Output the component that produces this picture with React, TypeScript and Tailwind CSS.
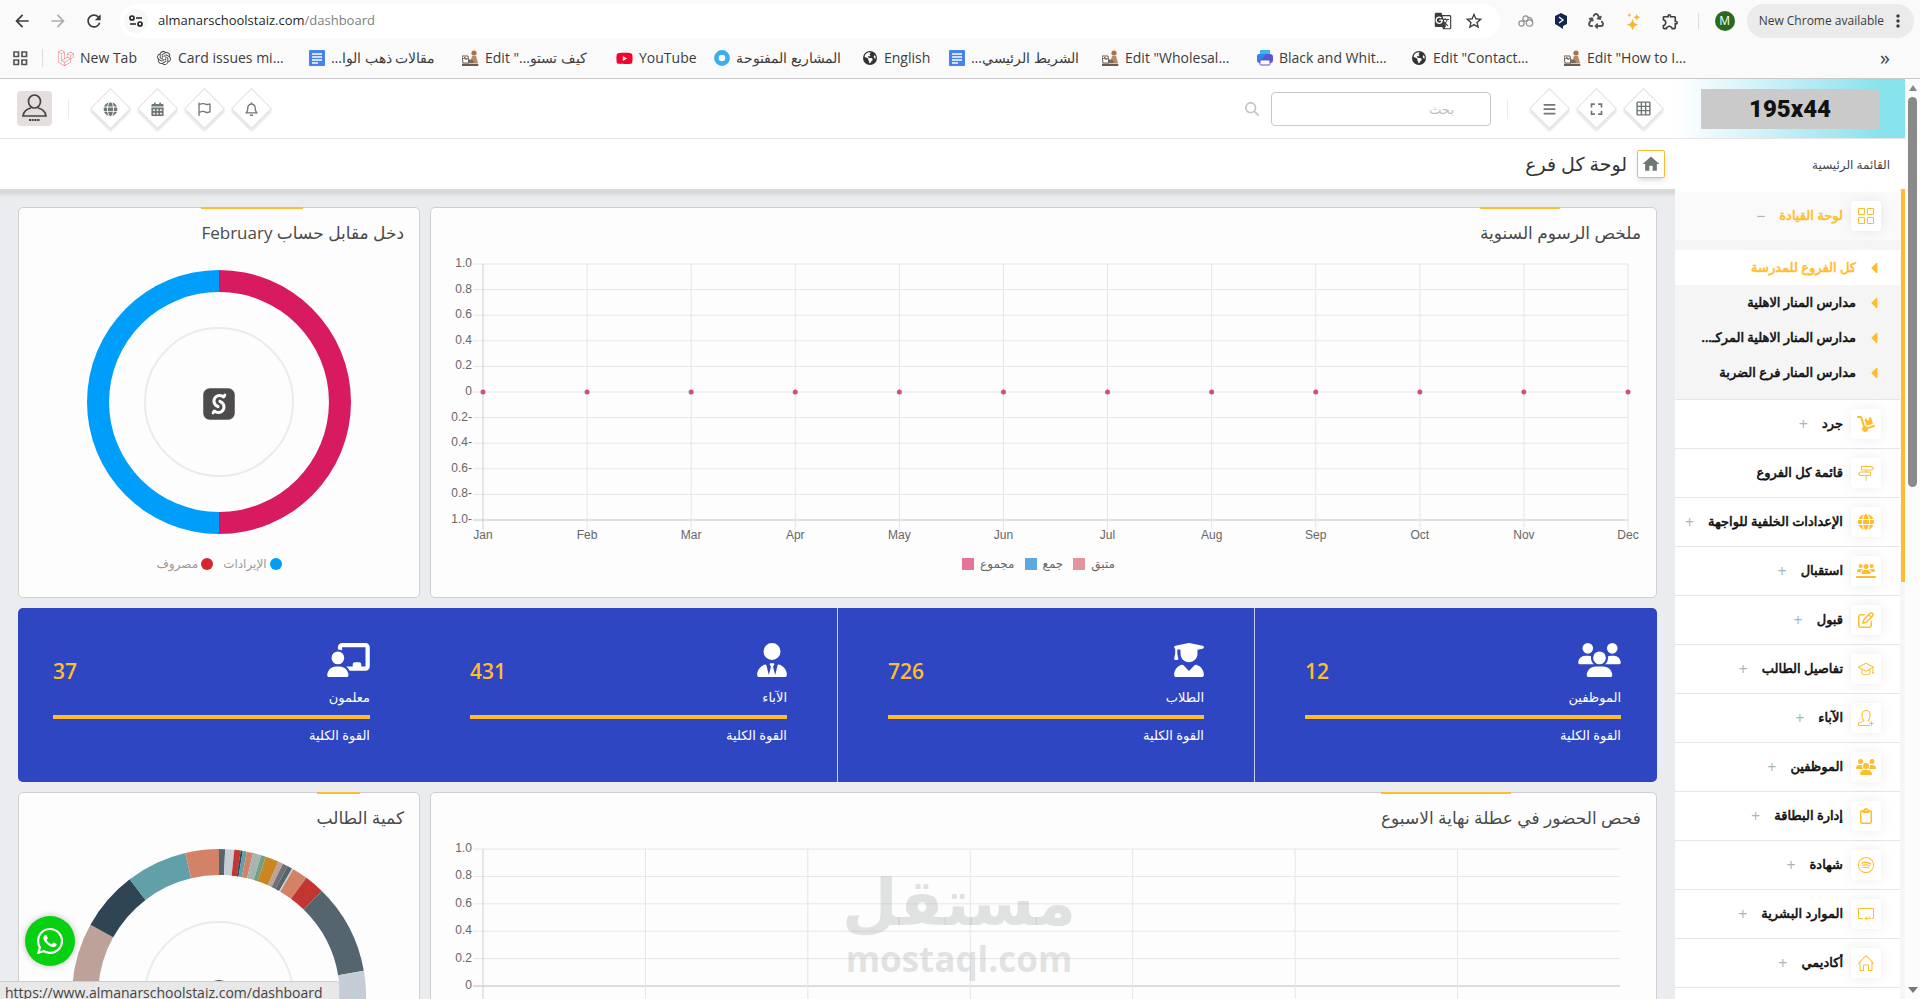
import type { ReactNode } from "react";
import {
  FaBars,
  FaCalendarDays,
  FaChalkboardUser,
  FaDolly,
  FaEarthAmericas,
  FaGlobe,
  FaLaravel,
  FaMagnifyingGlass,
  FaRecycle,
  FaRegBell,
  FaRegClipboard,
  FaRegFlag,
  FaRegPenToSquare,
  FaUserGraduate,
  FaUserTie,
  FaUsers,
  FaUsersLine,
  FaWhatsapp,
  FaYoutube,
} from "react-icons/fa6";
import { FaSellcast, FaCaretLeft } from "react-icons/fa";
import {
  MdArrowBack,
  MdArrowForward,
  MdGTranslate,
  MdGridOn,
  MdMoreVert,
  MdOutlineExtension,
  MdRefresh,
  MdStarOutline,
  MdFullscreen,
  MdHome,
} from "react-icons/md";
import { BsStars } from "react-icons/bs";
import { SiOpenai } from "react-icons/si";
import {
  SlDirections,
  SlGraduation,
  SlGrid,
  SlHome,
  SlSocialSpotify,
  SlUserFollow,
} from "react-icons/sl";

/* ---------- Browser bar ---------- */

function DocsIcon() {
  return (
    <svg width="16" height="16" viewBox="0 0 16 16">
      <rect width="16" height="16" rx="1" fill="#4683ea" />
      <path d="M3 4h10M3 7h10M3 10h10M3 13h6" stroke="#fff" strokeWidth="1.4" />
    </svg>
  );
}

function SketchIcon() {
  return (
    <svg width="17" height="16" viewBox="0 0 17 16">
      <path d="M0 6h6l1 7H1z" fill="#fff" stroke="#6b5a4c" />
      <path d="M1 9l2-2 1 3 2-2M0 14h16v2H0z" fill="#6b5a4c" stroke="#6b5a4c" strokeWidth=".6" />
      <circle cx="12" cy="3" r="2.600" fill="#b07040" />
      <path d="M10 6h4l2 7H8z" fill="#b98a66" />
      <path d="M6 9l5 1 1 3-6 0z" fill="#7b6a5c" />
    </svg>
  );
}

function RingIcon() {
  return (
    <svg width="16" height="16" viewBox="0 0 16 16">
      <circle cx="8" cy="8" r="5.6" fill="none" stroke="#3aaeed" strokeWidth="4.6" />
    </svg>
  );
}

function PrinterIcon() {
  return (
    <svg width="16" height="16" viewBox="0 0 16 16">
      <path d="M3 0h10v5H3z" fill="#35b8f0" />
      <rect y="4" width="16" height="9" rx="3" fill="#5a55d0" />
      <path d="M0 6a3 3 0 0 1 3-2h6l-6 8a3 3 0 0 1-3-3z" fill="#2f86ea" />
      <rect x="3" y="10" width="10" height="5" rx="1" fill="#fff" stroke="#6a4fc0" />
    </svg>
  );
}

function TuneIcon() {
  return (
    <svg width="14" height="12" viewBox="0 0 14 12" fill="none" stroke="#222" strokeWidth="1.7">
      <circle cx="3" cy="3" r="2" />
      <path d="M7 3h6M1 9h6" />
      <circle cx="11" cy="9" r="2" />
    </svg>
  );
}

const bookmarks: { label: string; icon: ReactNode; width: string; rtl?: boolean }[] = [
  { label: "New Tab", icon: <FaLaravel className="size-4 text-[#ef6a6a]" />, width: "w-[98px]" },
  { label: "Card issues mi…", icon: <SiOpenai className="size-3.5 text-[#444]" />, width: "w-[153px]" },
  { label: "مقالات ذهب الوا…", icon: <DocsIcon />, width: "w-[154px]", rtl: true },
  { label: "Edit \"…كيف تستو", icon: <SketchIcon />, width: "w-[154px]" },
  { label: "YouTube", icon: <FaYoutube className="size-[17px] text-[#f8002f]" />, width: "w-[97px]" },
  { label: "المشاريع المفتوحة", icon: <RingIcon />, width: "w-[148px]", rtl: true },
  { label: "English", icon: <FaEarthAmericas className="size-3.5 text-[#333]" />, width: "w-[87px]" },
  { label: "الشريط الرئيسي…", icon: <DocsIcon />, width: "w-[154px]", rtl: true },
  { label: "Edit \"Wholesal…", icon: <SketchIcon />, width: "w-[154px]" },
  { label: "Black and Whit…", icon: <PrinterIcon />, width: "w-[154px]" },
  { label: "Edit \"Contact…", icon: <FaEarthAmericas className="size-3.5 text-[#333]" />, width: "w-[154px]" },
  { label: "Edit \"How to I…", icon: <SketchIcon />, width: "w-[140px]" },
];

function BrowserBar() {
  return (
    <div className="shrink-0 border-b border-[#c8c8c8] bg-[#fafafa] font-['Open_Sans','Noto_Sans',sans-serif] text-[#3c3c3c]">
      <div className="flex h-[38px] items-center pt-1">
        <div className="flex w-[120px] items-center gap-4 pl-3">
          <button aria-label="Back"><MdArrowBack className="size-5" /></button>
          <button aria-label="Forward"><MdArrowForward className="size-5 text-[#aab0ae]" /></button>
          <button aria-label="Reload"><MdRefresh className="size-5" /></button>
        </div>
        <div className="flex h-[34px] flex-1 items-center rounded-full bg-white pr-4 pl-1">
          <button aria-label="Site information" className="flex size-6 items-center justify-center rounded-full bg-[#f7f7f7]">
            <TuneIcon />
          </button>
          <span className="flex-1 pl-2.5 text-[13px] text-[#1f1f1f]">
            almanarschoolstaiz.com<span className="text-[#7c8280]">/dashboard</span>
          </span>
          <MdGTranslate className="mr-3 size-[18px]" />
          <MdStarOutline className="size-5" />
        </div>
        <div className="flex items-center gap-5 pl-[18px]">
          <svg width="16" height="14" viewBox="0 0 16 14" fill="none" stroke="#8a8f8e" strokeWidth="1.2">
            <circle cx="3.5" cy="9.5" r="2.600" />
            <circle cx="7.500" cy="4.500" r="2.600" />
            <circle cx="11.500" cy="9" r="3.200" />
            <path d="M10 3.500a4 4 0 0 1 4.500 4" />
          </svg>
          <svg width="14" height="18" viewBox="0 0 14 18">
            <path d="M7 1l6 3v8l-4 2v3l-3-2-5-3V4z" fill="#13264f" />
            <path d="M5 5l4 3-4 3" fill="none" stroke="#fff" strokeWidth="1.3" />
          </svg>
          <FaRecycle className="size-4 text-[#555]" />
          <BsStars className="size-[17px] -scale-x-100 text-[#ffb42e]" />
          <MdOutlineExtension className="size-[19px]" />
        </div>
        <span className="ml-[18px] h-4 w-px bg-[#dcdcdc]" />
        <span className="ml-4 flex size-5 items-center justify-center rounded-full bg-[#2a6a1c] text-xs text-white">M</span>
        <button className="mr-1.5 ml-3 flex h-[34px] items-center rounded-full bg-[#ebebeb] pr-1.5 pl-3 text-xs">
          New Chrome available
          <MdMoreVert className="ml-1 size-5" />
        </button>
      </div>
      <nav aria-label="Bookmarks" className="flex h-10 items-center pl-3 text-sm">
        <svg width="16" height="16" viewBox="0 0 16 16" fill="none" stroke="#555" strokeWidth="1.7">
          <path d="M2 2h4.500v4.500H2zM10 2h4.500v4.500H10zM2 10h4.500v4.500H2zM10 10h4.500v4.500H10z" />
        </svg>
        <span className="mx-[14px] h-[18px] w-px bg-[#ddd]" />
        {bookmarks.map((b) => (
          <a key={b.label} href="#" className={`flex shrink-0 items-center gap-1.5 whitespace-nowrap ${b.width}`}>
            <span className="flex w-[17px] shrink-0 justify-center">{b.icon}</span>
            <span dir={b.rtl ? "rtl" : "ltr"}>{b.label}</span>
          </a>
        ))}
        <button aria-label="More bookmarks" className="mr-[30px] ml-auto text-xl leading-5">»</button>
      </nav>
    </div>
  );
}

/* ---------- App header ---------- */

function Diamond({ label, children }: { label: string; children: ReactNode }) {
  return (
    <button
      aria-label={label}
      className="mx-[9px] flex size-[29px] rotate-45 items-center justify-center border border-[#e2e2e2] bg-white text-[#6f7776] shadow-[2px_2px_2px_#e4e4e4]"
    >
      <span className="-rotate-45">{children}</span>
    </button>
  );
}

function AppHeader() {
  return (
    <header className="flex h-[60px] shrink-0 items-center border-b border-[#e5e5e5] bg-white">
      <div className="flex h-full w-[230px] items-center justify-end bg-linear-to-l from-[#86e2ec] from-10% via-[#b9ebf6] via-45% to-white pl-[26px]">
        <div className="flex h-10 w-[178px] items-center justify-center bg-[#cacaca] font-[Roboto,sans-serif] text-2xl font-black text-[#111]">
          195x44
        </div>
      </div>
      <div className="flex pr-2">
        <Diamond label="الوحدات"><MdGridOn className="size-[17px]" /></Diamond>
        <Diamond label="ملء الشاشة"><MdFullscreen className="size-5" /></Diamond>
        <Diamond label="القائمة"><FaBars className="size-3.5" /></Diamond>
      </div>
      <span className="mr-[18px] h-5 w-px bg-[#ececec]" />
      <form className="mr-4 flex items-center gap-3">
        <input
          aria-label="بحث"
          placeholder="بحث"
          className="h-[34px] w-[220px] rounded border border-[#c9c9c9] px-9 text-[13px] placeholder:text-[#bdbdbd]"
        />
        <button aria-label="ابحث"><FaMagnifyingGlass className="size-3.5 text-[#c6c6c6]" /></button>
      </form>
      <div className="mr-auto flex">
        <Diamond label="الإشعارات"><FaRegBell className="size-3.5" /></Diamond>
        <Diamond label="الرسائل"><FaRegFlag className="size-3.5" /></Diamond>
        <Diamond label="التقويم"><FaCalendarDays className="size-3.5" /></Diamond>
        <Diamond label="اللغة"><FaGlobe className="size-3.5" /></Diamond>
      </div>
      <span className="mr-[18px] h-5 w-px bg-[#ececec]" />
      <button aria-label="الحساب" className="mr-4 ml-[17px] size-[35px] rounded bg-[#e4dfdd]">
        <svg viewBox="0 0 35 35" fill="none" stroke="#444" strokeWidth="1.7">
          <ellipse cx="17.500" cy="10.500" rx="6" ry="6.500" />
          <path d="M14 17c-4 1-7.500 3-8 8h23c-.5-5-4-7-8-8" />
          <path d="M12 29h11" strokeWidth="2" strokeDasharray="2 .6" />
        </svg>
      </button>
    </header>
  );
}

/* ---------- Sidebar ---------- */

function RoomIcon() {
  return (
    <svg className="size-4" viewBox="0 0 16 16" fill="none" stroke="currentColor">
      <path d="M5 12.500H.5v-10h15v10h-2M7 12.500h5v-2M9 10.500l-2 2 2 2" />
    </svg>
  );
}

const branches = ["مدارس المنار الاهلية", "مدارس المنار الاهلية المركـ...", "مدارس المنار فرع الضربة"];

const menu: { label: string; icon: ReactNode; leaf?: boolean }[] = [
  { label: "جرد", icon: <FaDolly className="size-[18px]" /> },
  { label: "قائمة كل الفروع", icon: <SlDirections className="size-4" />, leaf: true },
  { label: "الإعدادات الخلفية للواجهة", icon: <FaGlobe className="size-4" /> },
  { label: "استقبال", icon: <FaUsersLine className="size-5" /> },
  { label: "قبول", icon: <FaRegPenToSquare className="size-4" /> },
  { label: "تفاصيل الطالب", icon: <SlGraduation className="size-4" /> },
  { label: "الآباء", icon: <SlUserFollow className="size-4" /> },
  { label: "الموظفين", icon: <FaUsers className="size-5" /> },
  { label: "إدارة البطاقة", icon: <FaRegClipboard className="size-4" /> },
  { label: "شهادة", icon: <SlSocialSpotify className="size-4" /> },
  { label: "الموارد البشرية", icon: <RoomIcon /> },
  { label: "أكاديمي", icon: <SlHome className="size-4" /> },
];

function MenuIcon({ children }: { children: ReactNode }) {
  return (
    <span className="flex size-[30px] shrink-0 items-center justify-center rounded bg-white text-[#ffbd2e] shadow-[0_0_14px_rgba(0,0,0,0.08)]">
      {children}
    </span>
  );
}

// A stroked regular weight: the bold Arabic face is too wide for the menu
function MenuLabel({ children }: { children: ReactNode }) {
  return <span className="[-webkit-text-stroke:0.6px_currentColor]">{children}</span>;
}

function Sidebar() {
  return (
    <aside className="flex w-[230px] shrink-0 flex-col bg-white">
      <p className="h-[50px] shrink-0 pt-4 pr-[15px] text-xs leading-5 text-[#444]">القائمة الرئيسية</p>
      <div className="flex min-h-0 flex-1">
        <div className="w-[5px] shrink-0 bg-[#f6f6f6]">
          <div className="h-[393px] w-1 bg-[#ffbd2e]" />
        </div>
        <nav className="min-w-0 flex-1 overflow-hidden text-[13px] whitespace-nowrap text-[#111]">
          <a href="#" className="mt-[3px] flex h-12 items-center gap-2 bg-[#fafafa] pr-[19px] text-[#ffbd2e]">
            <MenuIcon><SlGrid className="size-4" /></MenuIcon>
            <MenuLabel>لوحة القيادة</MenuLabel>
            <span className="mr-1.5 text-base text-[#a9b7b5]">−</span>
          </a>
          <ul className="border-b border-[#e5e5e5] bg-[#f5f5f5] pt-2.5 pb-[9px]">
            <li>
              <a href="#" className="flex h-[35px] items-center gap-3 bg-white pr-5 text-[#ffbd2e]">
                <FaCaretLeft className="h-[18px] w-3 shrink-0" />
                <MenuLabel>كل الفروع للمدرسة</MenuLabel>
              </a>
            </li>
            {branches.map((name) => (
              <li key={name}>
                <a href="#" className="flex h-[35px] items-center gap-3 pr-5">
                  <FaCaretLeft className="h-[18px] w-3 shrink-0 text-[#ffbd2e]" />
                  <MenuLabel>{name}</MenuLabel>
                </a>
              </li>
            ))}
          </ul>
          <ul>
            {menu.map((item) => (
              <li key={item.label} className="border-b border-[#e5e5e5]">
                <a href="#" className="flex h-12 items-center gap-2 pr-[19px]">
                  <MenuIcon>{item.icon}</MenuIcon>
                  <MenuLabel>{item.label}</MenuLabel>
                  {!item.leaf && <span className="mr-1.5 text-base text-[#a9b7b5]">+</span>}
                </a>
              </li>
            ))}
          </ul>
        </nav>
      </div>
    </aside>
  );
}

/* ---------- Cards and charts ---------- */

function Card({ title, children }: { title: string; children: ReactNode }) {
  return (
    <section className="rounded-[5px] border border-[#cfcfcf] bg-[#fdfdfd]">
      <h2 className="relative -mt-px mr-[15px] flex h-[53px] w-fit items-center pb-0.5 text-[17px] font-medium text-[#4a4a4a]">
        <span className="absolute top-0 left-0 h-0.5 w-1/2 bg-[#ffbd2e]" />
        {title}
      </h2>
      {children}
    </section>
  );
}

const months = ["Jan", "Feb", "Mar", "Apr", "May", "Jun", "Jul", "Aug", "Sep", "Oct", "Nov", "Dec"];
const feeTicks = ["1.0", "0.8", "0.6", "0.4", "0.2", "0", "0.2-", "0.4-", "0.6-", "0.8-", "1.0-"];
const attendanceTicks = ["1.0", "0.8", "0.6", "0.4", "0.2", "0"];

function FeesChart() {
  const step = 25.6;
  return (
    <div dir="ltr" className="mt-1 pr-7 pl-[52px]">
      <svg className="block h-[282px] w-full overflow-visible font-['Liberation_Sans',Arial,sans-serif] text-xs" fill="#666">
        {feeTicks.map((t, i) => (
          <g key={t}>
            <line x1="-10" x2="100%" y1={i * step} y2={i * step} stroke={i === 10 ? "#c4c4c4" : "#e6e6e6"} />
            <text x="-11" y={i * step + 3} textAnchor="end">{t}</text>
          </g>
        ))}
        {months.map((m, i) => {
          const x = `${(i * 100) / 11}%`;
          return (
            <g key={m}>
              <line x1={x} x2={x} y1="0" y2="266" stroke={i === 0 ? "#cfcfcf" : "#e6e6e6"} />
              <circle cx={x} cy={5 * step} r="2.500" fill="#cf4f80" />
              <text x={x} y="275" textAnchor="middle">{m}</text>
            </g>
          );
        })}
      </svg>
    </div>
  );
}

function AttendanceChart() {
  const step = 27.4;
  return (
    <div dir="ltr" className="mt-1 pr-9 pl-[52px]">
      <svg className="block h-[300px] w-full overflow-visible font-['Liberation_Sans',Arial,sans-serif] text-xs" fill="#666">
        {attendanceTicks.map((t, i) => (
          <g key={t}>
            <line x1="-10" x2="100%" y1={i * step} y2={i * step} stroke={i === 5 ? "#bcbcbc" : "#e6e6e6"} />
            <text x="-11" y={i * step + 3} textAnchor="end">{t}</text>
          </g>
        ))}
        {[0, 1, 2, 3, 4, 5, 6].map((i) => (
          <line key={i} x1={`${(i * 100) / 7}%`} x2={`${(i * 100) / 7}%`} y1="0" y2="300" stroke={i === 0 ? "#cfcfcf" : "#e6e6e6"} />
        ))}
      </svg>
    </div>
  );
}

function arc(from: number, to: number, outer: number, inner: number) {
  const point = (deg: number, r: number) => {
    const a = (deg * Math.PI) / 180;
    return `${(r * Math.sin(a)).toFixed(2)} ${(-r * Math.cos(a)).toFixed(2)}`;
  };
  const large = to - from > 180 ? 1 : 0;
  return `M${point(from, outer)}A${outer} ${outer} 0 ${large} 1 ${point(to, outer)}L${point(to, inner)}A${inner} ${inner} 0 ${large} 0 ${point(from, inner)}Z`;
}

// [end angle, colour], clockwise from the top
const classes: [number, string][] = [
  [2.4, "#546570"],
  [6, "#c4ccd5"],
  [8.5, "#c23531"],
  [9.3, "#2f4554"],
  [10.9, "#61a0a8"],
  [13.4, "#d48265"],
  [16.7, "#a5b5b0"],
  [18.6, "#749f83"],
  [23.8, "#ca8622"],
  [25.8, "#bda29a"],
  [27.8, "#6e7074"],
  [29.8, "#546570"],
  [30.4, "#c4ccd5"],
  [36.5, "#d48265"],
  [44.4, "#c23531"],
  [80.1, "#546570"],
  [130, "#c4ccd5"],
  [200, "#6e7074"],
  [250, "#ca8622"],
  [299, "#bda29a"],
  [322.6, "#2f4554"],
  [346.7, "#61a0a8"],
  [360, "#d48265"],
];

function IncomeDonut() {
  return (
    <div className="relative mt-2.5 flex items-center justify-center">
      <svg className="size-[264px]" viewBox="-132 -132 264 264">
        <path d={arc(0, 180, 132, 110)} fill="#d81b60" />
        <path d={arc(180, 360, 132, 110)} fill="#009efb" />
        <circle r="74" fill="none" stroke="#ebebed" strokeWidth="2" />
      </svg>
      <FaSellcast className="absolute mt-1 size-9 text-[#4d4b4c]" />
    </div>
  );
}

function StudentDonut() {
  return (
    <div className="relative mt-1 flex items-center justify-center">
      <svg className="size-[294px]" viewBox="-147 -147 294 294">
        {classes.map(([end, color], i) => (
          <path key={end} d={arc(i ? classes[i - 1][0] : 0, end, 147, 121)} fill={color} />
        ))}
        <circle r="74" fill="none" stroke="#ebebed" strokeWidth="2" />
      </svg>
      <FaUserGraduate className="absolute size-8 text-[#4d4b4c]" />
    </div>
  );
}

const legend = [
  { label: "مجموع", color: "bg-[#e5749b]" },
  { label: "جمع", color: "bg-[#5da8e0]" },
  { label: "متبق", color: "bg-[#e2959f]" },
];

const stats = [
  { label: "الموظفين", value: 12, icon: <FaUsers className="h-[34px] w-[43px]" />, line: true },
  { label: "الطلاب", value: 726, icon: <FaUserGraduate className="h-[34px] w-[30px]" />, line: true },
  { label: "الآباء", value: 431, icon: <FaUserTie className="h-[34px] w-[30px]" />, line: false },
  { label: "معلمون", value: 37, icon: <FaChalkboardUser className="h-[34px] w-[43px]" />, line: false },
];

function Stats() {
  return (
    <section className="my-2.5 overflow-hidden rounded-[5px] bg-[#2e46c2]">
      <div className="-mr-[14px] -ml-[15px] grid grid-cols-4">
        {stats.map((s) => (
          <div key={s.label} className={`h-[174px] px-[50px] pt-[35px] text-[13px] text-white ${s.line ? "border-l border-[#c9cff0]" : ""}`}>
            <div className="flex items-start justify-between">
              {s.icon}
              <span className="pt-3.5 text-[21px] leading-7 font-semibold text-[#ffbd2e]">{s.value}</span>
            </div>
            <p className="mt-0.5 leading-5">{s.label}</p>
            <div className="mt-2 h-1 bg-[#ffbd2e]" />
            <p className="mt-1.5 leading-5">القوة الكلية</p>
          </div>
        ))}
      </div>
    </section>
  );
}

function Dashboard() {
  return (
    <main className="min-w-0 flex-1 overflow-hidden">
      <div className="flex h-[50px] items-center bg-white pr-2.5 shadow-[0_3px_3px_3px_#d9d9d9]">
        <a href="#" aria-label="الرئيسية" className="flex size-7 items-center justify-center rounded-xs border border-[#ffbd2e] shadow-md">
          <MdHome className="size-5 text-[#6f7776]" />
        </a>
        <h1 className="mr-2.5 text-[19px] text-[#333]">لوحة كل فرع</h1>
      </div>
      <div className="px-[18px] pt-[18px]">
        <div className="grid grid-cols-[1227fr_402fr] gap-2.5">
          <Card title="ملخص الرسوم السنوية">
            <FeesChart />
            <div dir="ltr" className="mt-2 mb-[23px] flex h-5 items-center justify-center gap-2.5 pr-2.5 text-xs text-[#666]">
              {legend.map((l) => (
                <span key={l.label} className="flex items-center gap-1.5">
                  <span className={`size-3 ${l.color}`} />
                  {l.label}
                </span>
              ))}
            </div>
          </Card>
          <Card title="دخل مقابل حساب February">
            <IncomeDonut />
            <div className="mt-5 mb-[22px] flex h-5 items-center justify-center gap-2.5 text-xs text-[#999]">
              <span className="flex items-center gap-[3px]">
                <span className="size-3 rounded-full bg-[#009efb]" />
                الإيرادات
              </span>
              <span className="flex items-center gap-[3px]">
                <span className="size-3 rounded-full bg-[#d3282f]" />
                مصروف
              </span>
            </div>
          </Card>
        </div>
        <Stats />
        <div className="grid grid-cols-[1227fr_402fr] gap-2.5">
          <Card title="فحص الحضور في عطلة نهاية الاسبوع">
            <AttendanceChart />
          </Card>
          <Card title="كمية الطالب">
            <StudentDonut />
          </Card>
        </div>
      </div>
    </main>
  );
}

export default function App() {
  return (
    <div className="relative flex h-screen flex-col overflow-hidden bg-[#ebecf0]">
      <BrowserBar />
      <div className="flex min-h-0 flex-1">
        <div dir="rtl" className="flex min-w-0 flex-1 flex-col font-['Open_Sans','Noto_Sans','DejaVu_Sans',sans-serif]">
          <AppHeader />
          <div className="flex min-h-0 flex-1">
            <Sidebar />
            <Dashboard />
          </div>
        </div>
        {/* Page scrollbar */}
        <div className="flex w-[15px] flex-col items-center justify-between bg-[#fcfcfc] py-1.5">
          <div className="flex flex-col items-center gap-1.5">
            <svg width="8" height="6"><path d="M4 0l4 6H0z" fill="#888" /></svg>
            <div className="h-[390px] w-[9px] rounded-full bg-[#8a8a8a]" />
          </div>
          <svg width="10" height="6"><path d="M5 6L0 0h10z" fill="#777" /></svg>
        </div>
      </div>

      {/* Watermark */}
      <div className="pointer-events-none absolute bottom-5 left-[844px] flex w-[230px] flex-col items-center font-['Open_Sans','DejaVu_Sans',sans-serif] font-bold text-[#b4b8b8]/40">
        <p dir="rtl" className="text-[64px] leading-[76px]">مستقل</p>
        <p className="text-[35px] leading-10">mostaql.com</p>
      </div>

      <a
        href="#"
        aria-label="WhatsApp"
        className="absolute bottom-[33px] left-[25px] flex size-[50px] items-center justify-center rounded-full bg-[#06d00f] text-white shadow-[0_0_6px_#bbb]"
      >
        <FaWhatsapp className="size-[30px]" />
      </a>
      <div className="absolute bottom-0 left-0 h-[18px] w-[340px] overflow-hidden rounded-tr border-t border-r border-[#cfcfcf] bg-[#e8e8e8] pl-[5px] font-['Open_Sans',sans-serif] text-sm leading-[22px] text-[#444]">
        https://www.almanarschoolstaiz.com/dashboard
      </div>
    </div>
  );
}
